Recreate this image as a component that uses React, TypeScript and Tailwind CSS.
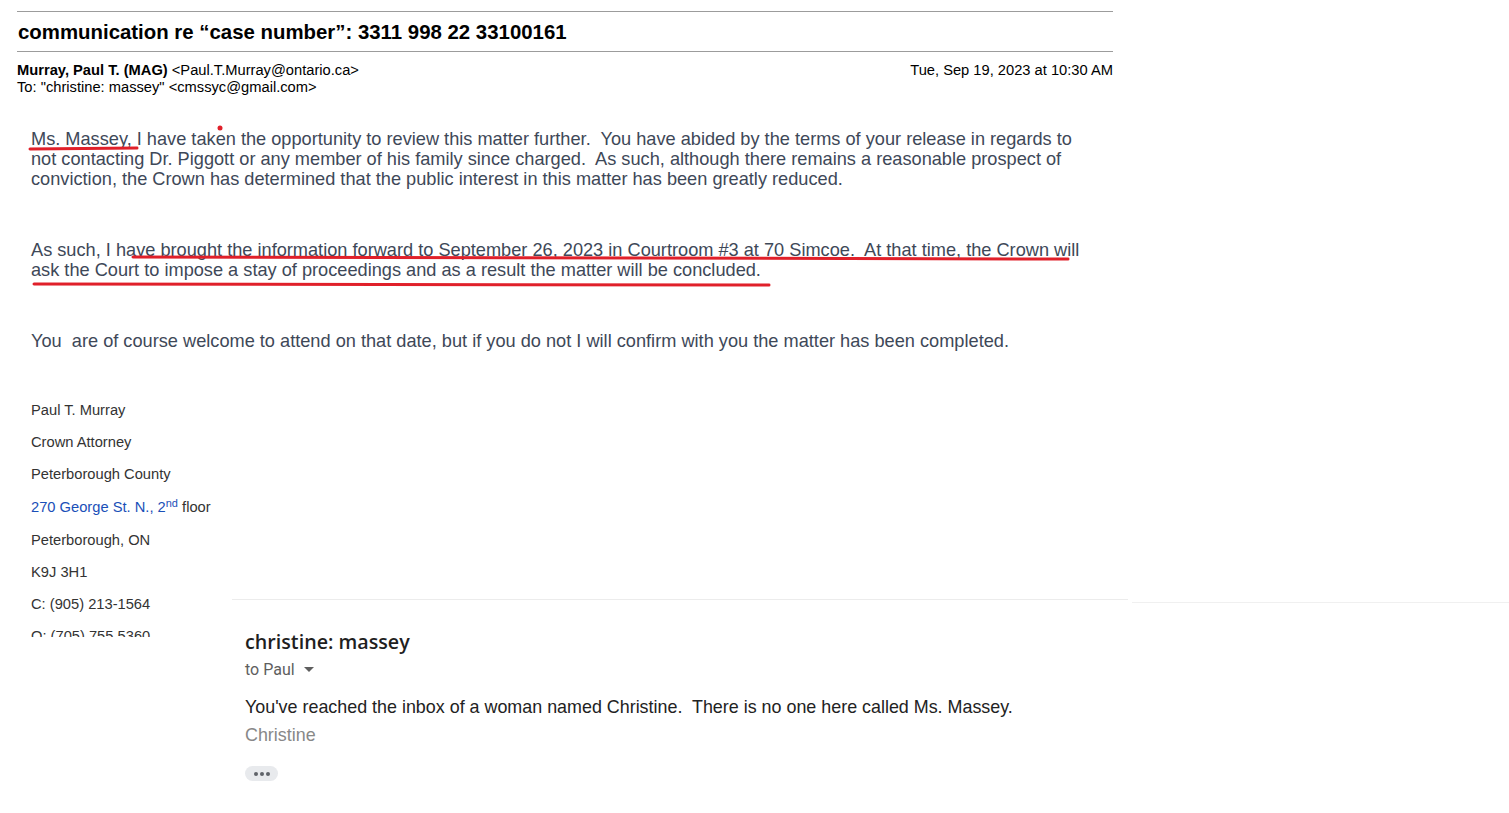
import React from 'react';

const sigLines = [
  'Paul T. Murray',
  'Crown Attorney',
  'Peterborough County',
];

function Signature() {
  return (
    <div className="pl-[31px] text-[14.7px] text-[#333] font-['Liberation_Sans',Arial,sans-serif]">
      {sigLines.map(l => (
        <div key={l} className="leading-[32px]">{l}</div>
      ))}
      <div className="leading-[34px] h-[34px]">
        <span className="text-[#1a4fb8]">270 George St. N., 2</span>
        <sup className="text-[#1a4fb8] text-[11px]">nd</sup> floor
      </div>
      <div className="leading-[32px]">Peterborough, ON</div>
      <div className="leading-[32px]">K9J 3H1</div>
    </div>
  );
}

function Reply() {
  return (
    <div className="flex-1">
      <div className="flex items-start">
        <div className="w-[896px] border-t border-[#ececec]" />
        <div className="w-[377px] ml-[4px] mt-[3px] border-t border-[#f0f0f0]" />
      </div>
      <div className="pl-[13px] pt-[27px]">
        <div className="text-[19.7px] font-semibold text-[#1f1f1f] leading-[24px] font-['Open_Sans',Roboto,sans-serif]">christine: massey</div>
        <div className="mt-[6px] flex items-center text-[16px] text-[#5e5e5e] leading-[20px] font-['Roboto',sans-serif]">
          to Paul
          <svg width="10" height="6" viewBox="0 0 10 6" className="ml-[9px]">
            <path d="M0 0 L10 0 L5 5 Z" fill="#5e5e5e" />
          </svg>
        </div>
        <div className="mt-[17px] text-[17.9px] text-[#222] leading-[20px] font-['Liberation_Sans',Arial,sans-serif] whitespace-pre">
          You've reached the inbox of a woman named Christine.  There is no one here called Ms. Massey.
        </div>
        <div className="mt-[8px] text-[17.9px] text-[#888] leading-[20px] font-['Liberation_Sans',Arial,sans-serif]">Christine</div>
        <div className="mt-[21px] w-[33px] h-[15px] rounded-full bg-[#e8eaed] flex items-center justify-center gap-[2px]">
          <span className="w-[4px] h-[4px] rounded-full bg-[#5f6368]" />
          <span className="w-[4px] h-[4px] rounded-full bg-[#5f6368]" />
          <span className="w-[4px] h-[4px] rounded-full bg-[#5f6368]" />
        </div>
      </div>
    </div>
  );
}

export default function App() {
  const body = "font-['Liberation_Sans',Arial,sans-serif] text-[18.2px] leading-[20px] text-[#3e4858] whitespace-pre";
  return (
    <div className="relative w-[1509px] h-[813px] bg-white overflow-hidden">
      <div className="pt-[11px] pl-[17px] w-[1113px] font-['Liberation_Sans',Arial,sans-serif] text-black">
        <div className="border-t border-[#9c9c9c]" />
        <h1 className="pt-[8px] pb-[7px] pl-[1px] text-[20.4px] leading-[24px] font-bold">
          communication re “case number”: 3311 998 22 33100161
        </h1>
        <div className="border-t border-[#9c9c9c]" />
        <div className="mt-[10px] flex justify-between text-[14.7px] leading-[17px]">
          <div>
            <div><b>Murray, Paul T. (MAG)</b> &lt;Paul.T.Murray@ontario.ca&gt;</div>
            <div>To: "christine: massey" &lt;cmssyc@gmail.com&gt;</div>
          </div>
          <div>Tue, Sep 19, 2023 at 10:30 AM</div>
        </div>
      </div>

      <div className="pl-[31px] pt-[33px]">
        <p className={body}>
          {"Ms. Massey, I have taken the opportunity to review this matter further.  You have abided by the terms of your release in regards to\nnot contacting Dr. Piggott or any member of his family since charged.  As such, although there remains a reasonable prospect of\nconviction, the Crown has determined that the public interest in this matter has been greatly reduced."}
        </p>
        <p className={body + " mt-[51px]"}>
          {"As such, I have brought the information forward to September 26, 2023 in Courtroom #3 at 70 Simcoe.  At that time, the Crown will\nask the Court to impose a stay of proceedings and as a result the matter will be concluded."}
        </p>
        <p className={body + " mt-[51px]"}>
          {"You  are of course welcome to attend on that date, but if you do not I will confirm with you the matter has been completed."}
        </p>
      </div>

      <div className="mt-[43px]">
        <Signature />
        <div className="flex">
          <div className="w-[232px] h-[49px] overflow-hidden self-start pl-[31px] text-[14.7px] text-[#333] font-['Liberation_Sans',Arial,sans-serif]">
            <div className="leading-[32px]">C: (905) 213-1564</div>
            <div className="leading-[32px]">O: (705) 755 5360</div>
          </div>
          <div className="pt-[11px] flex-1">
            <Reply />
          </div>
        </div>
      </div>

      {/* red pen marks */}
      <svg className="absolute left-0 top-0 pointer-events-none" width="1509" height="813">
        <path d="M30 149 L137 148" stroke="#e0202a" strokeWidth="3" strokeLinecap="round" />
        <circle cx="220" cy="128" r="2.5" fill="#e0202a" />
        <path d="M133 257 L1068 259" stroke="#e0202a" strokeWidth="3" strokeLinecap="round" />
        <path d="M34 284 L769 285" stroke="#e0202a" strokeWidth="3" strokeLinecap="round" />
      </svg>
    </div>
  );
}
